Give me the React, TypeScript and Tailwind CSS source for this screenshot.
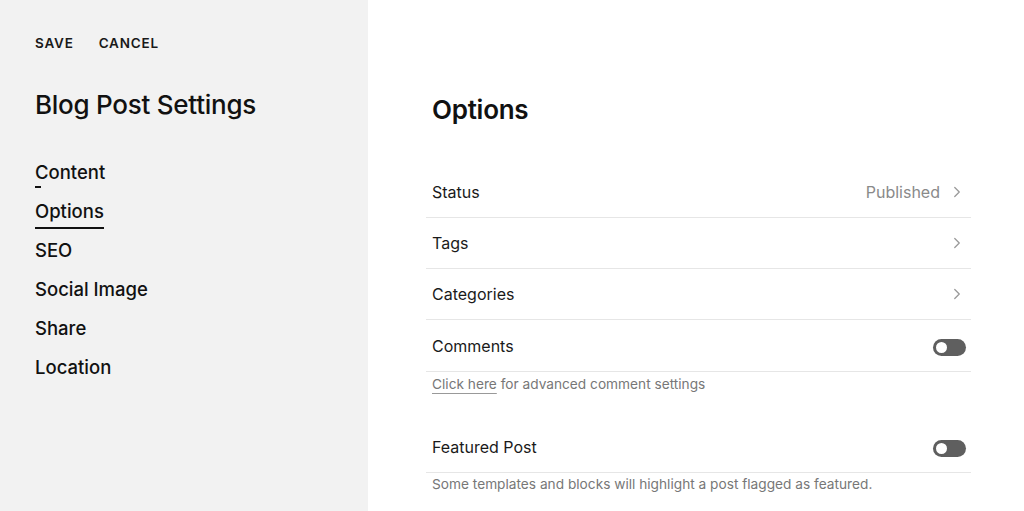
import { ChevronRight } from 'lucide-react';

const NAV = ['Content', 'Options', 'SEO', 'Social Image', 'Share', 'Location'];

function Toggle() {
  return (
    <span className="relative inline-flex h-[17px] w-[33px] items-center rounded-full bg-[#5f5f5f]">
      <span className="absolute left-[1px] h-[15px] w-[15px] rounded-full border-2 border-[#5f5f5f] bg-white" />
    </span>
  );
}

function Row({ label, value, toggle }: { label: string; value?: string; toggle?: boolean }) {
  return (
    <div className="flex h-[51px] items-center justify-between border-b border-[#e6e6e6] pl-[6px] pr-[5px]">
      <span className="text-[16px] text-[#1a1a1a]">{label}</span>
      {toggle ? (
        <span className="flex pt-[2px]">
          <Toggle />
        </span>
      ) : (
        <span className="flex items-center gap-[8px] text-[16px] text-[#8a8a8a]">
          {value}
          <ChevronRight className="h-[18px] w-[18px] text-[#9a9a9a]" strokeWidth={1.75} />
        </span>
      )}
    </div>
  );
}

export default function App() {
  return (
    <div className="flex h-[511px] w-full overflow-hidden bg-white font-['Inter',sans-serif] text-[#111]">
      <aside className="w-[368px] shrink-0 bg-[#f2f2f2] pl-[35px] pt-[33px]">
        <div className="flex gap-[25px] text-[13.5px] font-semibold tracking-[0.06em] text-[#1a1a1a]">
          <span>SAVE</span>
          <span>CANCEL</span>
        </div>
        <h1 className="mt-[36px] text-[26px] font-medium leading-[32px] tracking-[-0.01em]">Blog Post Settings</h1>
        <nav className="mt-[38px] flex flex-col items-start">
          {NAV.map((item, i) => (
            <div key={item} className="relative h-[39px] text-[18.5px] font-medium leading-[26px]">
              {item}
              {i === 0 && <span className="absolute left-0 top-[27px] h-[2px] w-[6px] bg-[#111]" />}
              {i === 1 && <span className="absolute left-0 right-0 top-[29px] h-[2px] bg-[#111]" />}
            </div>
          ))}
        </nav>
      </aside>

      <main className="w-[545px] pl-[58px] pt-[94px]">
        <h2 className="px-[6px] text-[26px] font-semibold leading-[32px] tracking-[-0.01em]">Options</h2>
        <div className="mt-[41px] w-[545px]">
          <Row label="Status" value="Published" />
          <Row label="Tags" />
          <Row label="Categories" />
          <div className="pt-[1px]">
            <Row label="Comments" toggle />
          </div>
          <p className="px-[6px] pt-[2px] text-[13.7px] leading-[20px] text-[#777]">
            <span className="underline decoration-[#999] underline-offset-[4px]">Click here</span> for advanced comment settings
          </p>
          <div className="mt-[28px]">
            <Row label="Featured Post" toggle />
          </div>
          <p className="px-[6px] pt-[1px] text-[13.7px] leading-[20px] text-[#777]">
            Some templates and blocks will highlight a post flagged as featured.
          </p>
        </div>
      </main>
    </div>
  );
}
